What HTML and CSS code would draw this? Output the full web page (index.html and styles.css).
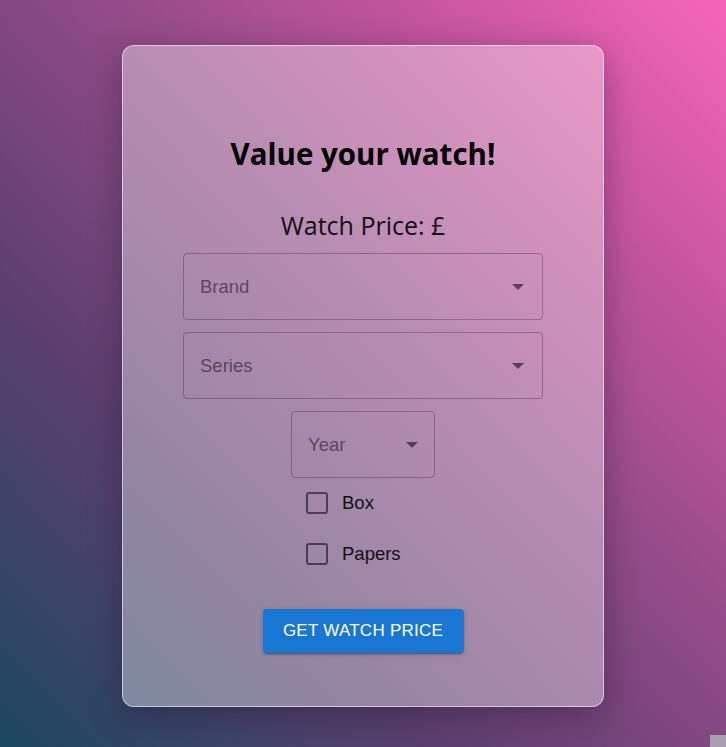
FILE: index.html
```html
<!DOCTYPE html>
<html lang="en">
<head>
<meta charset="utf-8">
<title>Value your watch</title>
<link rel="stylesheet" href="styles.css">
</head>
<body>
<main class="page">
  <section class="card">
    <h1 class="title">Value your watch!</h1>
    <p class="price">Watch Price: £</p>
    <div class="field field-wide">
      <span class="field-label">Brand</span>
      <span class="caret"></span>
    </div>
    <div class="field field-wide">
      <span class="field-label">Series</span>
      <span class="caret"></span>
    </div>
    <div class="field field-small">
      <span class="field-label">Year</span>
      <span class="caret"></span>
    </div>
    <div class="checks">
      <label class="check"><span class="box"></span><span class="check-label">Box</span></label>
      <label class="check"><span class="box"></span><span class="check-label">Papers</span></label>
    </div>
    <button class="btn">GET WATCH PRICE</button>
  </section>
</main>
<div class="corner"></div>
</body>
</html>
```

FILE: styles.css
```css
html, body {
  margin: 0;
  height: 100%;
}
body {
  background: linear-gradient(to top right, #1d4862 0%, #5a3f6e 30%, #8d4a86 55%, #c4559e 78%, #f666b8 100%);
  font-family: "Liberation Sans", Arial, sans-serif;
  overflow: hidden;
}
.page {
  display: flex;
  justify-content: center;
  padding-top: 45px;
}
.card {
  width: 482px;
  height: 662px;
  box-sizing: border-box;
  border: 1px solid rgba(255,255,255,0.55);
  border-radius: 12px;
  background: rgba(255,255,255,0.37);
  box-shadow: 0 8px 32px rgba(30,10,40,0.35);
  display: flex;
  flex-direction: column;
  align-items: center;
  padding-top: 88px;
}
.title {
  margin: 0;
  font-family: "Open Sans", "Noto Sans", sans-serif;
  font-weight: 700;
  font-size: 29.5px;
  line-height: 40px;
  color: #000;
}
.price {
  margin: 35px 0 0;
  font-family: "Open Sans", "Noto Sans", sans-serif;
  font-size: 25px;
  line-height: 32px;
  color: #111;
}
.field {
  box-sizing: border-box;
  height: 67px;
  border: 1px solid rgba(60,30,60,0.35);
  border-radius: 4px;
  display: flex;
  align-items: center;
  justify-content: space-between;
  padding: 0 18px 0 16px;
  margin-top: 12px;
}
.field-wide { width: 360px; }
.field-small { width: 144px; padding-right: 16px; }
.field-label {
  font-size: 18.5px;
  color: rgba(40,20,45,0.62);
}
.caret {
  width: 0;
  height: 0;
  border-left: 6px solid transparent;
  border-right: 6px solid transparent;
  border-top: 6px solid rgba(50,30,60,0.72);
}
.checks {
  align-self: flex-start;
  display: flex;
  flex-direction: column;
  gap: 11px;
  margin-top: 5px;
  margin-left: 183px;
}
.check {
  display: flex;
  align-items: center;
  height: 40px;
}
.box {
  box-sizing: border-box;
  width: 22px;
  height: 22px;
  border: 2px solid rgba(50,35,65,0.75);
  border-radius: 3px;
  margin-right: 14px;
}
.check-label {
  font-size: 18.5px;
  color: #111;
}
.btn {
  margin-top: 35px;
  width: 201px;
  height: 44px;
  border: 0;
  border-radius: 4px;
  background: #1976d2;
  color: #fff;
  font-family: "Liberation Sans", Arial, sans-serif;
  font-size: 17px;
  letter-spacing: 0.25px;
  box-shadow: 0 3px 1px -2px rgba(0,0,0,0.2), 0 2px 2px 0 rgba(0,0,0,0.14), 0 1px 5px 0 rgba(0,0,0,0.12);
  padding: 0;
}
.corner {
  position: absolute;
  right: 0;
  bottom: 0;
  width: 16px;
  height: 12px;
  background: #a7a0b0;
}
```
